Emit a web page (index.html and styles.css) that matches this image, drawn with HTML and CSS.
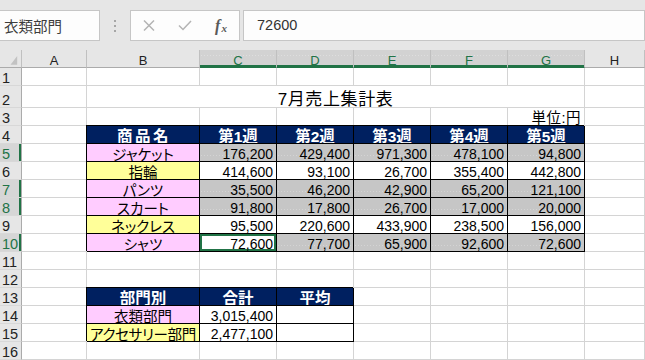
FILE: index.html
```html
<!DOCTYPE html>
<html lang="ja">
<head>
<meta charset="utf-8">
<title>7月売上集計表</title>
<link rel="stylesheet" href="styles.css">
</head>
<body>
<div class="formula-bar">
  <div class="namebox">衣類部門</div>
  <div class="grip"><svg width="4" height="12" viewBox="0 0 4 12"><rect x="1" y="0" width="2" height="2"/><rect x="1" y="5" width="2" height="2"/><rect x="1" y="10" width="2" height="2"/></svg></div>
  <div class="fxbox">
    <span class="fxbtn"><svg class="ico" width="12" height="11" viewBox="0 0 12 11"><path d="M1 0.5 L11 10.5 M11 0.5 L1 10.5"/></svg></span>
    <span class="fxbtn"><svg class="ico" width="14" height="11" viewBox="0 0 14 11"><path d="M1 5.5 L5 9.5 L13 1"/></svg></span>
    <span class="fxbtn fx"><i class="f">f</i><i class="x">x</i></span>
  </div>
  <div class="formula-input">72600</div>
</div>

<div class="sheet">
  <!-- column headers -->
  <div class="corner"><svg width="22" height="17" viewBox="0 0 22 17"><polygon points="11,15 18,15 18,6"/></svg></div>
  <div class="ch">A</div>
  <div class="ch">B</div>
  <div class="ch sel-ch">C</div>
  <div class="ch sel-ch">D</div>
  <div class="ch sel-ch">E</div>
  <div class="ch sel-ch">F</div>
  <div class="ch sel-ch">G</div>
  <div class="ch">H</div>

  <!-- row 1 -->
  <div class="rh">1</div><div></div><div></div><div></div><div></div><div></div><div></div><div></div><div></div>

  <!-- row 2 -->
  <div class="rh">2</div><div></div>
  <div class="title">7月売上集計表</div>
  <div></div>

  <!-- row 3 -->
  <div class="rh">3</div><div></div><div></div><div></div><div></div><div></div><div></div>
  <div class="jp right unit">単位:円</div>
  <div></div>

  <!-- row 4 -->
  <div class="rh">4</div><div></div>
  <div class="t hd wide">商品名</div>
  <div class="t hd">第1週</div>
  <div class="t hd">第2週</div>
  <div class="t hd">第3週</div>
  <div class="t hd">第4週</div>
  <div class="t hd">第5週</div>
  <div></div>

  <!-- row 5 -->
  <div class="rh sel-rh">5</div><div></div>
  <div class="t jp pink">ジャケット</div>
  <div class="t num sel">176,200</div>
  <div class="t num sel">429,400</div>
  <div class="t num sel">971,300</div>
  <div class="t num sel">478,100</div>
  <div class="t num sel">94,800</div>
  <div></div>

  <!-- row 6 -->
  <div class="rh">6</div><div></div>
  <div class="t jp yellow">指輪</div>
  <div class="t num">414,600</div>
  <div class="t num">93,100</div>
  <div class="t num">26,700</div>
  <div class="t num">355,400</div>
  <div class="t num">442,800</div>
  <div></div>

  <!-- row 7 -->
  <div class="rh sel-rh">7</div><div></div>
  <div class="t jp pink">パンツ</div>
  <div class="t num sel">35,500</div>
  <div class="t num sel">46,200</div>
  <div class="t num sel">42,900</div>
  <div class="t num sel">65,200</div>
  <div class="t num sel">121,100</div>
  <div></div>

  <!-- row 8 -->
  <div class="rh sel-rh">8</div><div></div>
  <div class="t jp pink">スカート</div>
  <div class="t num sel">91,800</div>
  <div class="t num sel">17,800</div>
  <div class="t num sel">26,700</div>
  <div class="t num sel">17,000</div>
  <div class="t num sel">20,000</div>
  <div></div>

  <!-- row 9 -->
  <div class="rh">9</div><div></div>
  <div class="t jp yellow">ネックレス</div>
  <div class="t num">95,500</div>
  <div class="t num">220,600</div>
  <div class="t num">433,900</div>
  <div class="t num">238,500</div>
  <div class="t num">156,000</div>
  <div></div>

  <!-- row 10 -->
  <div class="rh sel-rh">10</div><div></div>
  <div class="t jp pink">シャツ</div>
  <div class="t num active">72,600</div>
  <div class="t num sel">77,700</div>
  <div class="t num sel">65,900</div>
  <div class="t num sel">92,600</div>
  <div class="t num sel">72,600</div>
  <div></div>

  <!-- row 11 -->
  <div class="rh">11</div><div></div><div></div><div></div><div></div><div></div><div></div><div></div><div></div>
  <!-- row 12 -->
  <div class="rh">12</div><div></div><div></div><div></div><div></div><div></div><div></div><div></div><div></div>

  <!-- row 13 -->
  <div class="rh">13</div><div></div>
  <div class="t hd">部門別</div>
  <div class="t hd">合計</div>
  <div class="t hd">平均</div>
  <div></div><div></div><div></div><div></div>

  <!-- row 14 -->
  <div class="rh">14</div><div></div>
  <div class="t jp pink">衣類部門</div>
  <div class="t num">3,015,400</div>
  <div class="t num"></div>
  <div></div><div></div><div></div><div></div>

  <!-- row 15 -->
  <div class="rh">15</div><div></div>
  <div class="t jp yellow tight">アクセサリー部門</div>
  <div class="t num">2,477,100</div>
  <div class="t num"></div>
  <div></div><div></div><div></div><div></div>

  <!-- row 16 -->
  <div class="rh">16</div><div></div><div></div><div></div><div></div><div></div><div></div><div></div><div></div>
</div>
</body>
</html>
```

FILE: styles.css
```css
* {
  box-sizing: border-box;
  margin: 0;
  padding: 0;
}

html, body {
  width: 645px;
  height: 360px;
  overflow: hidden;
}

body {
  background: #e6e6e6;
  font-family: "Liberation Sans", "Noto Sans CJK JP", sans-serif;
  color: #000;
}

/* ---------- formula bar ---------- */
.formula-bar {
  height: 50px;
  display: flex;
  align-items: flex-start;
  padding-top: 10px;
}

.namebox {
  width: 101px;
  height: 31px;
  margin-left: -1px;
  background: #fdfdfd;
  border: 1px solid #c6c6c6;
  padding-left: 4px;
  font: 14.5px "Noto Sans CJK JP", sans-serif;
  line-height: 29px;
  color: #3c3c3c;
}

.grip {
  width: 30px;
  height: 31px;
  display: flex;
  align-items: center;
  justify-content: center;
}

.grip svg {
  fill: #a6a6a6;
}

.fxbox {
  width: 110px;
  height: 31px;
  background: #fdfdfd;
  border: 1px solid #c6c6c6;
  display: grid;
  grid-template-columns: repeat(3, 36px);
  align-items: center;
}

.fxbtn {
  display: flex;
  justify-content: center;
  align-items: center;
  height: 29px;
}

.ico {
  fill: none;
  stroke: #b4b4b4;
  stroke-width: 1.5;
}

.fx {
  font-family: "Liberation Serif", serif;
  color: #5a5a5a;
  padding-top: 1px;
}

.fx .f {
  font-size: 16px;
  font-weight: bold;
}

.fx .x {
  font-size: 11px;
  font-weight: bold;
  margin-left: 1px;
  position: relative;
  top: 2px;
}

.formula-input {
  flex: 1;
  height: 31px;
  margin-left: 3px;
  background: #fdfdfd;
  border: 1px solid #c6c6c6;
  padding-left: 13px;
  font: 14.5px "Liberation Sans", sans-serif;
  line-height: 29px;
  color: #333;
}

/* ---------- sheet ---------- */
.sheet {
  display: grid;
  grid-template-columns: 22px 65px 113px repeat(5, 77px) 60px;
  grid-template-rows: 18px 18px 22px repeat(14, 18px);
  background: #fff;
}

.sheet > div {
  border-right: 1px solid #d4d4d4;
  border-bottom: 1px solid #d4d4d4;
  display: flex;
  align-items: flex-end;
  white-space: nowrap;
  min-width: 0;
}

.corner {
  background: #e6e6e6;
  border-right-color: #c0c0c0 !important;
  border-bottom-color: #ababab !important;
}

.corner svg {
  fill: #c2c2c2;
}

.ch {
  background: #e6e6e6;
  border-right-color: #c0c0c0 !important;
  border-bottom-color: #ababab !important;
  justify-content: center;
  font: 13px "Liberation Sans", sans-serif;
  line-height: 13px;
  color: #222;
}

.sel-ch {
  background: #d2d2d2 linear-gradient(90deg, #dedede 1px, transparent 1px) 1px 5px / 3px 1px repeat-x;
  color: #217346;
  box-shadow: inset 0 -2px 0 #217346;
  border-bottom-color: #217346 !important;
}

.rh {
  background: #e6e6e6;
  border-right-color: #ababab !important;
  border-bottom-color: #d8d8d8 !important;
  padding-left: 2px;
  font: 14.5px "Liberation Sans", sans-serif;
  line-height: 13px;
  color: #222;
}

.sel-rh {
  background: #d6d6d6;
  color: #217346;
  box-shadow: inset -2px 0 0 #217346;
}

.title {
  grid-column: span 6;
  justify-content: center;
  font: 17px "Liberation Sans", "Noto Sans CJK JP", sans-serif;
  line-height: 15px;
  letter-spacing: 0.6px;
}

.jp {
  justify-content: center;
  font: 14.5px "Liberation Sans", "Noto Sans CJK JP", sans-serif;
  line-height: 11.5px;
  font-feature-settings: "palt";
}

.right {
  justify-content: flex-end;
  padding-right: 3px;
}

.unit {
  line-height: 14.5px;
  letter-spacing: 0.5px;
}

.tight {
  letter-spacing: -0.3px;
  overflow: visible;
}

.num {
  justify-content: flex-end;
  padding-right: 3px;
  font: 14px "Liberation Sans", sans-serif;
  line-height: 13px;
}

/* table cells */
.t {
  border-right-color: #000 !important;
  border-bottom-color: #000 !important;
  box-shadow: -1px -1px 0 #000;
}

.hd {
  background: #002060;
  color: #fff;
  justify-content: center;
  font: bold 15.5px "Liberation Sans", "Noto Sans CJK JP", sans-serif;
  line-height: 13px;
}

.wide {
  letter-spacing: 2.5px;
  padding-left: 2px;
}

.pink {
  background-color: #ffccff;
}

.yellow {
  background-color: #ffff99;
}

.sel {
  background: #c6c6c6 linear-gradient(90deg, #d4d4d4 1px, transparent 1px) 1px 11px / 3px 1px repeat-x;
}

.active {
  background: #fff;
  box-shadow: -1px -1px 0 #000, inset 0 0 0 2px #217346;
}
```
